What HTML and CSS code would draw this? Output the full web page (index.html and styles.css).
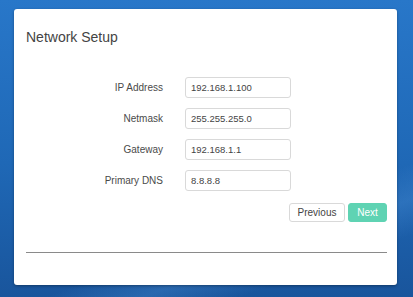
FILE: index.html
```html
<!DOCTYPE html>
<html>
<head>
<meta charset="utf-8">
<link rel="stylesheet" href="styles.css">
</head>
<body>
<div class="card">
  <h1 class="title">Network Setup</h1>
  <div class="form">
    <label class="label">IP Address</label>
    <div class="input">192.168.1.100</div>
    <label class="label">Netmask</label>
    <div class="input">255.255.255.0</div>
    <label class="label">Gateway</label>
    <div class="input">192.168.1.1</div>
    <label class="label">Primary DNS</label>
    <div class="input">8.8.8.8</div>
  </div>
  <div class="actions">
    <button class="btn btn-secondary">Previous</button>
    <button class="btn btn-primary">Next</button>
  </div>
  <hr class="divider">
</div>
</body>
</html>
```
FILE: styles.css
```css
html, body {
  margin: 0;
  height: 100%;
}
body {
  width: 413px;
  height: 297px;
  overflow: hidden;
  font-family: "Liberation Sans", Arial, sans-serif;
  background:
    linear-gradient(160deg, rgba(255,255,255,0) 70%, rgba(90,160,230,0.25) 78%, rgba(255,255,255,0) 86%),
    linear-gradient(180deg, #2877c9 0%, #1f68b6 55%, #19559c 100%);
  padding-top: 9px;
  box-sizing: border-box;
}
.card {
  margin: 0 16px 0 14px;
  height: 276px;
  background: #fff;
  border-radius: 3px;
  box-shadow: 0 1px 3px rgba(0,0,0,0.35);
  padding: 0 10px 0 12px;
  box-sizing: border-box;
  display: flex;
  flex-direction: column;
}
.title {
  margin: 20px 0 0;
  font-size: 14px;
  font-weight: normal;
  color: #444;
  line-height: 16px;
}
.form {
  margin-top: 32px;
  display: grid;
  grid-template-columns: 137px 106px;
  column-gap: 22px;
  row-gap: 10px;
  align-items: center;
}
.label {
  text-align: right;
  font-size: 10px;
  color: #4a4a4a;
}
.input {
  height: 21px;
  box-sizing: border-box;
  border: 1px solid #d9d9d9;
  border-radius: 3px;
  padding: 0 5px;
  font-size: 9.5px;
  line-height: 19px;
  color: #444;
}
.actions {
  margin-top: 12px;
  display: flex;
  justify-content: flex-end;
  gap: 3px;
}
.btn {
  height: 19px;
  padding: 0;
  border-radius: 3px;
  font-family: "Liberation Sans", Arial, sans-serif;
  font-size: 10px;
  line-height: 17px;
  box-sizing: border-box;
}
.btn-secondary {
  width: 56px;
  background: #fff;
  border: 1px solid #d9d9d9;
  color: #444;
}
.btn-primary {
  width: 39px;
  background: #5fd3b3;
  border: 1px solid #5fd3b3;
  color: #fff;
}
.divider {
  margin: 30px 0 0;
  border: 0;
  border-top: 1px solid #8a8a8a;
  height: 0;
}
```
